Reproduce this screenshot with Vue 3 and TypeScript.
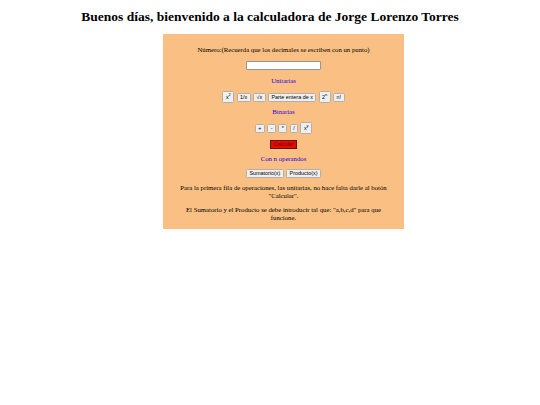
<script setup lang="ts">
const unarias: string[] = ['1/x', '√x', 'Parte entera de x']
const binarias: string[] = ['+', '-', '*', '/']
</script>

<template>
  <div class="page">
    <h1 class="title">Buenos días, bienvenido a la calculadora de Jorge Lorenzo Torres</h1>
    <main class="card">
      <p class="label">Número:(Recuerda que los decimales se escriben con un punto)</p>
      <input class="field" type="text" />
      <p class="heading">Unitarias</p>
      <div class="row">
        <button class="btn tall">x<sup>2</sup></button>
        <button v-for="u in unarias" :key="u" class="btn">{{ u }}</button>
        <button class="btn tall">2<sup>n</sup></button>
        <button class="btn">n!</button>
      </div>
      <p class="heading">Binarias</p>
      <div class="row">
        <button v-for="b in binarias" :key="b" class="btn">{{ b }}</button>
        <button class="btn tall">x<sup>y</sup></button>
      </div>
      <button class="btn calc">Calcular</button>
      <p class="heading">Con n operandos</p>
      <div class="row sums">
        <button class="btn">Sumatorio(x)</button>
        <button class="btn">Producto(x)</button>
      </div>
      <p class="note">Para la primera fila de operaciones, las unitarias, no hace falta darle al botón "Calcular".</p>
      <p class="note last">El Sumatorio y el Producto se debe introducir tal que: "a,b,c,d" para que funcione.</p>
    </main>
  </div>
</template>

<style scoped>
.page {
  font-family: "Liberation Serif", serif;
  color: #000;
  display: flex;
  flex-direction: column;
  align-items: flex-start;
}
.title {
  align-self: stretch;
  margin: 9px 0 9px;
  font-size: 13.5px;
  line-height: 16px;
  font-weight: 700;
  text-align: center;
}
.card {
  width: 241px;
  margin-left: 163px;
  box-sizing: border-box;
  background: #fabf82;
  padding: 12px 12px 8px;
  font-size: 6.75px;
  line-height: 8px;
  text-align: center;
  color: #000;
  display: flex;
  flex-direction: column;
  align-items: center;
}
.label { margin: 0 0 7px; }
.field {
  width: 73px;
  height: 7px;
  box-sizing: content-box;
  padding: 0;
  background: #fff;
  border: 1px solid #9a958e;
  border-radius: 1px;
  margin: 0 0 7px;
}
.heading { margin: 0 0 6px; color: #1c00e0; }
.row {
  display: flex;
  justify-content: center;
  align-items: center;
  gap: 2.25px;
  height: 12px;
  margin: 0 0 5px;
}
.row:has(+ .calc) { margin-bottom: 6px; }
.sums { height: 9px; margin-bottom: 6px; }
.btn {
  font-family: "Liberation Sans", sans-serif;
  font-size: 5.4px;
  line-height: 7px;
  height: 7px;
  padding: 0 2.5px;
  background: #efefef;
  border: 1px solid #b3aea7;
  border-radius: 1.5px;
  color: #000;
  box-sizing: content-box;
}
.tall { height: 9.5px; }
.btn sup { font-size: 4.05px; line-height: 0; }
.calc {
  background: #e60a00;
  border-color: #5a1a00;
  margin: 0 0 6px;
  width: 25px;
  padding: 0;
  border-radius: 0;
  color: #700;
}
.note { margin: 0 0 7px; line-height: 7.5px; }
.last { margin-bottom: 0; }
</style>
